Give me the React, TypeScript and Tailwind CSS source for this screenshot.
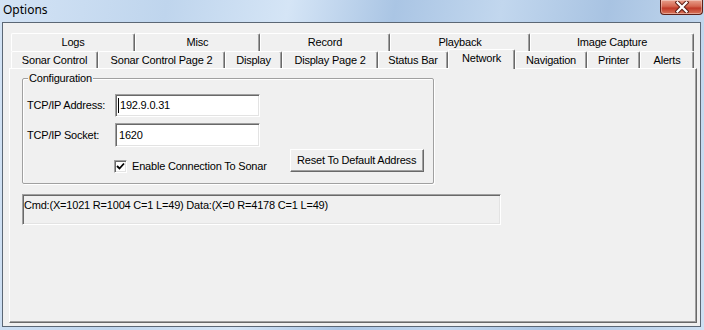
import React from "react";

const row1 = [
  { label: "Logs", w: "w-[124px]" },
  { label: "Misc", w: "w-[125px]" },
  { label: "Record", w: "w-[130px]" },
  { label: "Playback", w: "w-[140px]" },
  { label: "Image Capture", w: "w-[164px]" },
];

const row2 = [
  { label: "Sonar Control", w: "w-[87px]" },
  { label: "Sonar Control Page 2", w: "w-[127px]" },
  { label: "Display", w: "w-[57px]" },
  { label: "Display Page 2", w: "w-[96px]" },
  { label: "Status Bar", w: "w-[70px]" },
  { label: "Network", w: "w-[67px]", active: true },
  { label: "Navigation", w: "w-[72px]" },
  { label: "Printer", w: "w-[53px]" },
  { label: "Alerts", w: "w-[54px]" },
];

const tabBase =
  "flex items-center justify-center rounded-t-[2px] border-t border-l border-r border-t-white border-l-white border-r-[#696969] bg-[#f0f0f0] shadow-[inset_-1px_0_0_#a0a0a0] whitespace-nowrap";

function Tab({ label, w, active }: { label: string; w: string; active?: boolean }) {
  if (active) {
    return (
      <div className={`${w} relative z-10 -mx-[2px] -mb-[1px] h-[20px] box-content px-[2px]`}>
        <div className={`${tabBase} h-full w-full border-b-0 pb-[3px]`}>{label}</div>
      </div>
    );
  }
  return <div className={`${tabBase} ${w} h-full`}>{label}</div>;
}

function Sunken({ className, children }: { className: string; children?: React.ReactNode }) {
  return (
    <div
      className={`border border-t-[#a0a0a0] border-l-[#a0a0a0] border-b-white border-r-white shadow-[inset_1px_1px_0_#696969,inset_-1px_-1px_0_#e3e3e3] ${className}`}
    >
      {children}
    </div>
  );
}

export default function App() {
  return (
    <div
      className="flex h-[330px] w-[704px] flex-col overflow-hidden bg-[linear-gradient(100deg,#d3e3f5_0%,#bfd5ed_22%,#d5e5f6_38%,#aac5e4_52%,#c2d7ee_66%,#a8c3e2_80%,#cfe1f3_100%)] text-black"
      style={{ fontFamily: "'Liberation Sans', Arial, sans-serif" }}
    >
      {/* title bar */}
      <div className="flex h-[22px] shrink-0 items-start justify-between">
        <span className="pl-[3px] pt-[2px] text-[12px] leading-[16px] text-black [font-family:'Noto_Sans',sans-serif]">
          Options
        </span>
        <div className="mr-[1px] flex h-[15px] w-[43px] items-center justify-center rounded-b-[4px] border border-t-0 border-[#5e2018] bg-[linear-gradient(180deg,#e8a08c_0%,#d46650_45%,#c03a28_58%,#d9755a_100%)] shadow-[inset_0_0_0_1px_rgba(255,255,255,0.35)]">
          <svg width="14" height="12" viewBox="0 0 14 12">
            <path d="M2.5 1.5 L11.5 10.5 M11.5 1.5 L2.5 10.5" stroke="#5e2018" strokeWidth="4.2" strokeLinecap="square" />
            <path d="M2.5 1.5 L11.5 10.5 M11.5 1.5 L2.5 10.5" stroke="#ffffff" strokeWidth="2.2" strokeLinecap="square" />
          </svg>
        </div>
      </div>

      {/* client area */}
      <div className="ml-[2px] mr-[3px] h-[305px] shrink-0 border border-[#5b6775] bg-[#f0f0f0] pl-[6px] pt-[10px] text-[11px] tracking-[-0.2px]">
        {/* tab rows */}
        <div className="ml-[2px] flex h-[18px] w-[683px]">
          {row1.map((t) => (
            <Tab key={t.label} label={t.label} w={t.w} />
          ))}
        </div>
        <div className="ml-[2px] flex h-[17px] w-[683px] items-end">
          {row2.map((t) => (
            <Tab key={t.label} label={t.label} w={t.w} active={t.active} />
          ))}
        </div>

        {/* tab page */}
        <div className="h-[255px] w-[688px] border border-t-white border-l-white border-r-[#696969] border-b-[#696969] shadow-[inset_-1px_-1px_0_#a0a0a0]">
          <div className="relative ml-[12px] mt-[9px] h-[106px] w-[412px] rounded-[2px] border border-[#a0a0a0] shadow-[1px_1px_0_#ffffff,inset_1px_1px_0_#ffffff]">
            <span className="absolute -top-[8px] left-[5px] bg-[#f0f0f0] px-[1px] leading-[14px]">
              Configuration
            </span>

            <div className="flex flex-col pl-[4px] pt-[15px]">
              <div className="flex h-[23px] items-center">
                <span className="w-[88px]">TCP/IP Address:</span>
                <Sunken className="flex h-[23px] w-[145px] items-center bg-white pl-[2px]">
                  <span className="mr-[1px] h-[15px] w-[1px] bg-black" />
                  <span>192.9.0.31</span>
                </Sunken>
              </div>
              <div className="mt-[6px] flex h-[24px] items-center">
                <span className="w-[88px]">TCP/IP Socket:</span>
                <Sunken className="flex h-[24px] w-[145px] items-center bg-white pl-[3px]">
                  <span>1620</span>
                </Sunken>
              </div>
              <div className="mt-[8px] flex h-[22px] items-center">
                <div className="ml-[87px] flex items-center">
                  <Sunken className="flex h-[13px] w-[13px] items-center justify-center bg-white">
                    <svg width="9" height="9" viewBox="0 0 9 9">
                      <path d="M1 4 L3.5 6.5 L8 1.5" fill="none" stroke="#000" strokeWidth="1.8" />
                    </svg>
                  </Sunken>
                  <span className="ml-[5px] mt-[1px]">Enable Connection To Sonar</span>
                </div>
                <button className="ml-[23px] mt-[-12px] flex h-[23px] w-[134px] items-center justify-center border border-t-white border-l-white border-r-[#696969] border-b-[#696969] bg-[#f0f0f0] shadow-[inset_-1px_-1px_0_#a0a0a0]">
                  Reset To Default Address
                </button>
              </div>
            </div>
          </div>

          <Sunken className="ml-[12px] mt-[10px] h-[31px] w-[479px] bg-[#f0f0f0] pl-[1px] pt-[3px] leading-[14px]">
            Cmd:(X=1021 R=1004 C=1 L=49) Data:(X=0 R=4178 C=1 L=49)
          </Sunken>
        </div>
      </div>
    </div>
  );
}
